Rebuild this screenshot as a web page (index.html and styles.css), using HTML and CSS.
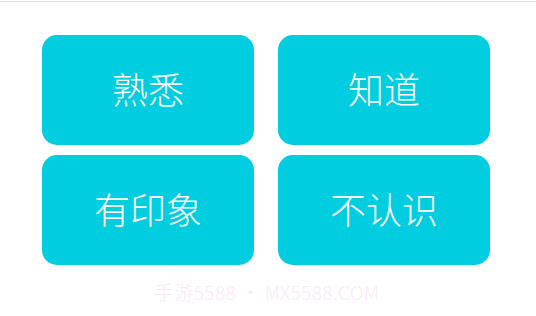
FILE: index.html
```html
<!DOCTYPE html>
<html lang="zh">
<head>
<meta charset="utf-8">
<link rel="stylesheet" href="styles.css">
</head>
<body>
<div class="topline"></div>
<div class="grid">
  <div class="btn">熟悉</div>
  <div class="btn">知道</div>
  <div class="btn">有印象</div>
  <div class="btn">不认识</div>
</div>
<div class="watermark">手游5588 • MX5588.COM</div>
</body>
</html>
```

FILE: styles.css
```css
html, body {
  margin: 0;
  padding: 0;
  background: #ffffff;
  width: 536px;
  height: 316px;
  overflow: hidden;
  font-family: "Noto Sans CJK SC", "Noto Sans", sans-serif;
}
.topline {
  margin-top: 1px;
  height: 1px;
  background: #dedede;
}
.grid {
  display: grid;
  grid-template-columns: 212px 212px;
  grid-auto-rows: 110px;
  column-gap: 24px;
  row-gap: 10px;
  padding: 33px 0 0 42px;
}
.btn {
  background: #00cde0;
  border-radius: 15px;
  color: #ffffff;
  font-size: 36px;
  font-weight: 300;
  display: flex;
  align-items: center;
  justify-content: center;
  line-height: 1;
  padding-bottom: 5px;
}
.watermark {
  margin-top: 16px;
  padding-left: 155px;
  font-size: 19px;
  font-weight: 300;
  letter-spacing: 0.4px;
  line-height: 22px;
  color: #fde8f6;
  font-family: "Noto Sans CJK SC", "Noto Sans", sans-serif;
}
```
